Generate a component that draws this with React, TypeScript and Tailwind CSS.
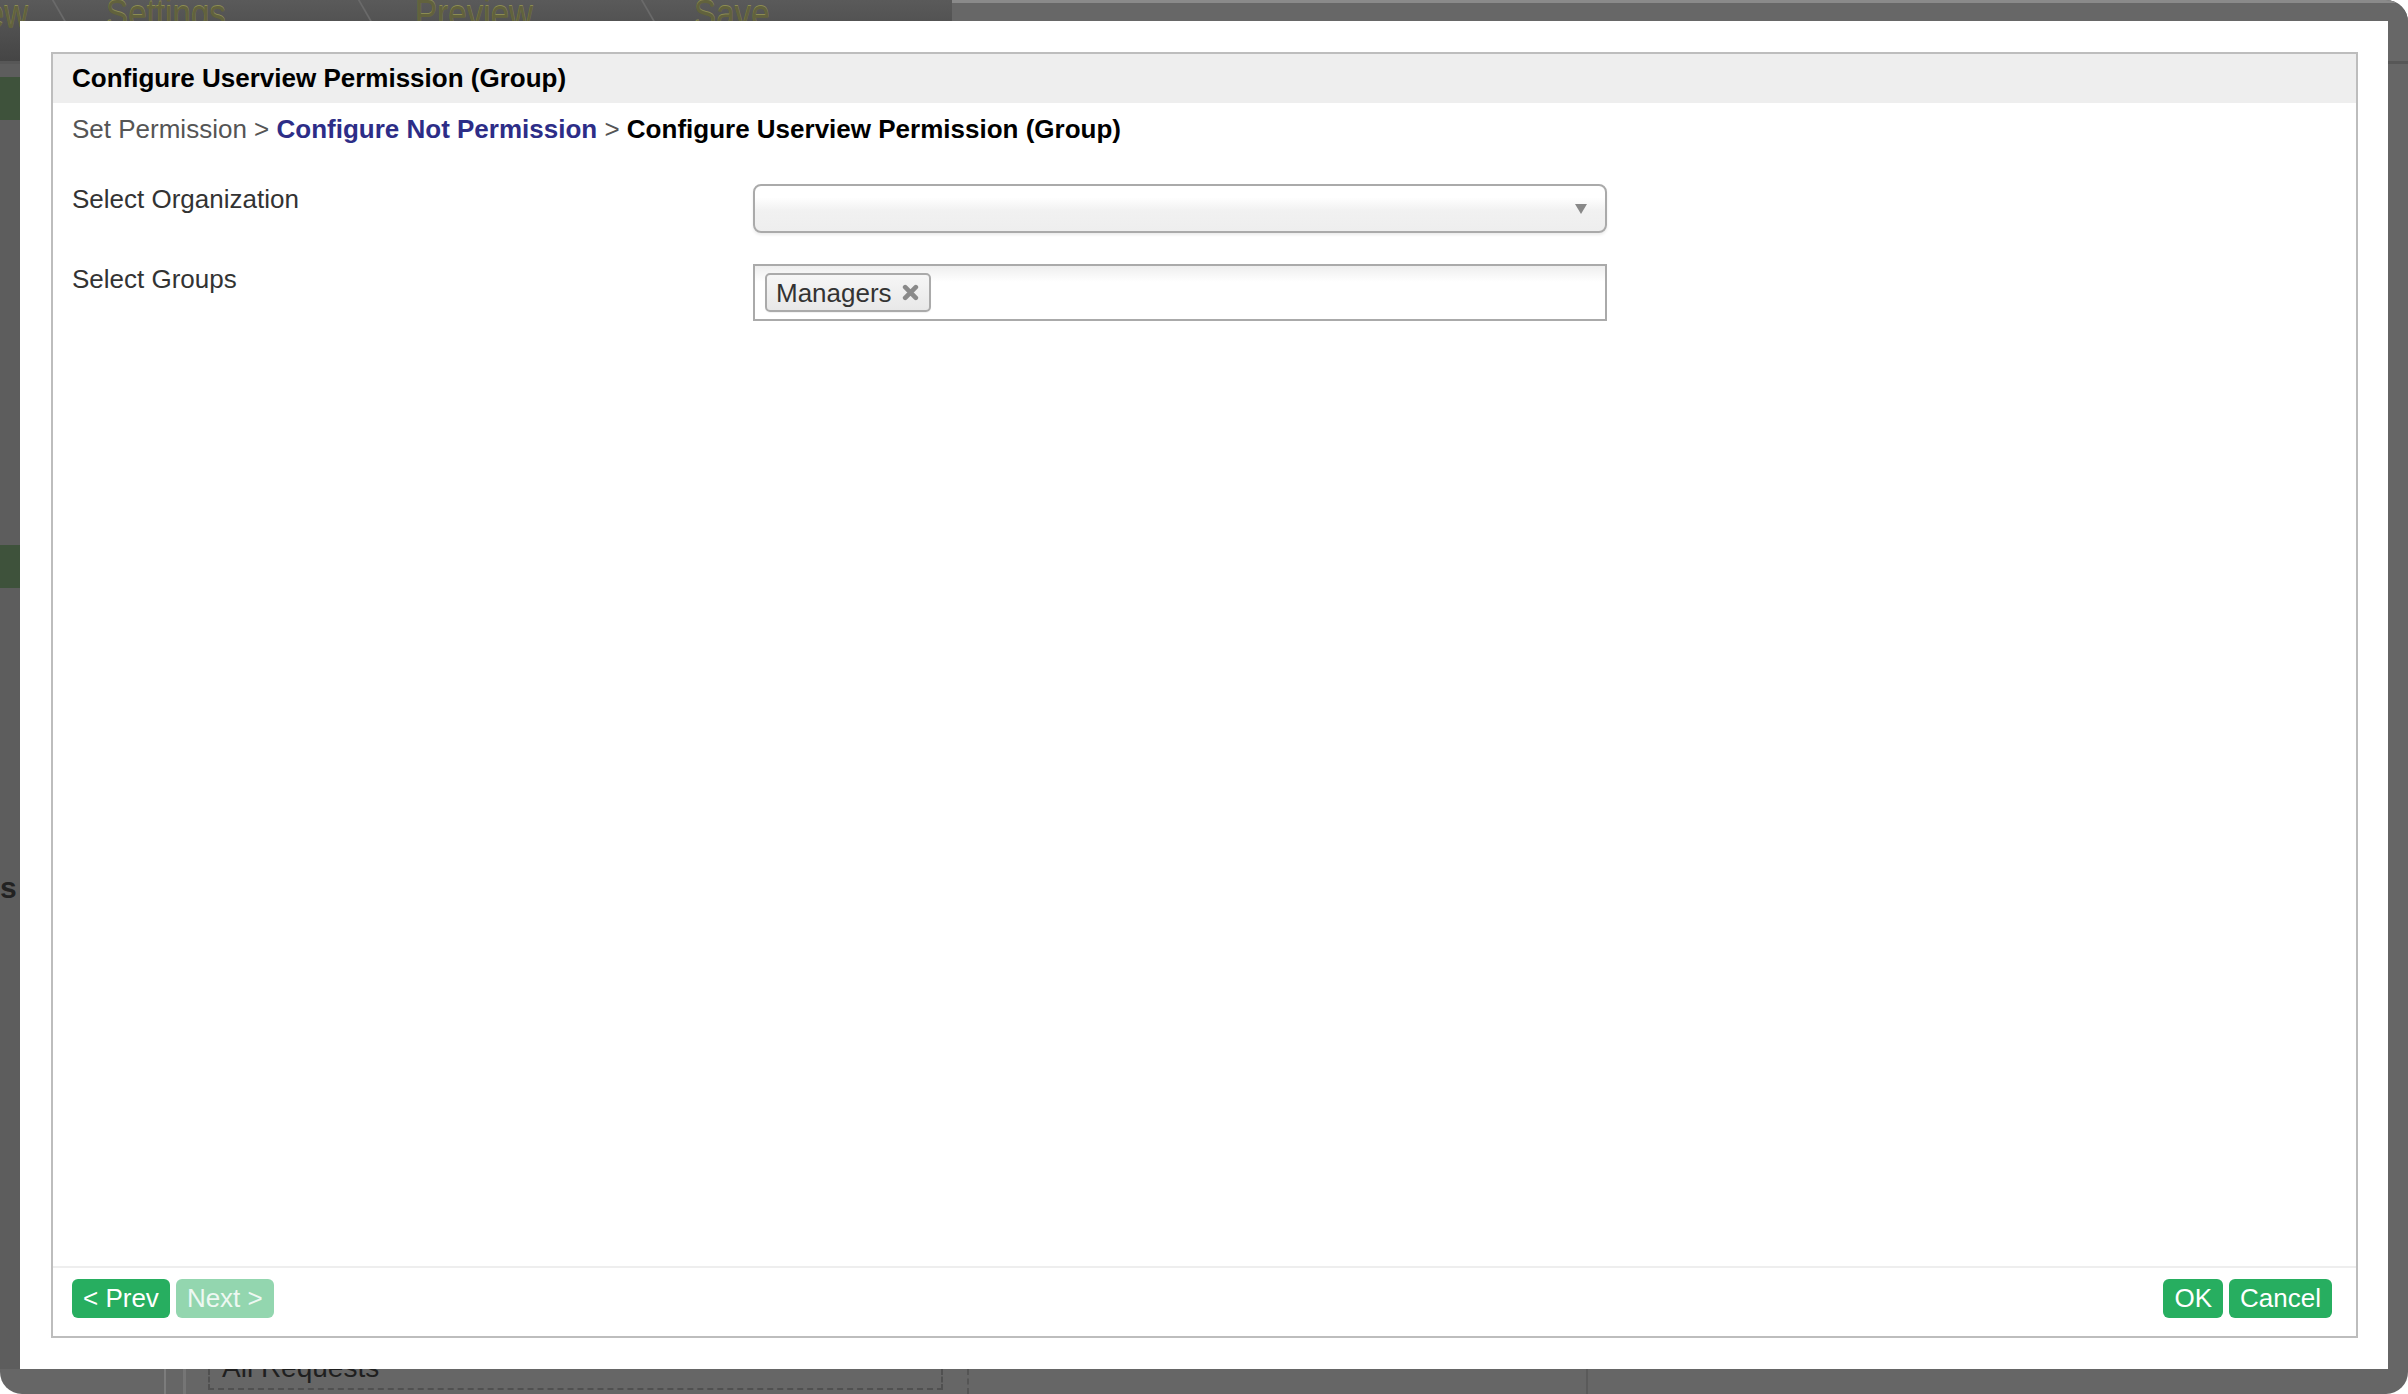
import React from 'react';

// Dimmed page that sits behind the dialog overlay
function TabSeparator() {
  return <span className="mt-[-4px] h-[40px] w-[2px] shrink-0 skew-x-[30deg] bg-[#6a6a6a]" />;
}

function TabLabel({ children }: { children: React.ReactNode }) {
  return (
    <span className="mt-[-6px] inline-block origin-left scale-x-[0.83] whitespace-nowrap text-[40px] leading-[40px] text-[#62623d] [text-shadow:0_-1px_0_#8c8c52]">
      {children}
    </span>
  );
}

function BackgroundPage() {
  return (
    <div className="absolute inset-0 flex flex-col overflow-hidden rounded-tr-[22px] rounded-b-[22px] bg-[#666666]">
      <div className="flex h-[64px] shrink-0 border-b-[3px] border-[#575757]">
        <div className="flex w-[952px] items-start overflow-hidden bg-[linear-gradient(to_bottom,#5a5a5a,#454545)]">
          <div className="flex w-[61px] shrink-0 justify-end pr-[33px]">
            <span className="mt-[-6px] inline-block origin-right scale-x-[0.83] whitespace-nowrap text-[40px] leading-[40px] text-[#62623d] [text-shadow:0_-1px_0_#8c8c52]">
              ew
            </span>
          </div>
          <TabSeparator />
          <div className="flex w-[304px] shrink-0 pl-[43px]">
            <TabLabel>Settings</TabLabel>
          </div>
          <TabSeparator />
          <div className="flex w-[281px] shrink-0 pl-[46px]">
            <TabLabel>Preview</TabLabel>
          </div>
          <TabSeparator />
          <div className="flex flex-1 pl-[42px]">
            <TabLabel>Save</TabLabel>
          </div>
        </div>
        <div className="flex-1 border-t-[3px] border-[#8a8a8a] bg-[#676767]" />
      </div>

      <div className="flex flex-1">
        <div className="flex w-[20px] flex-col bg-[#5d5d5d]">
          <div className="mt-[13px] h-[43px] bg-[#3e523b]" />
          <div className="mt-[425px] h-[43px] bg-[#3e523b]" />
          <div className="mt-[285px] text-[30px] font-bold leading-[30px] text-[#222]">s</div>
        </div>
        <div className="flex-1" />
      </div>

      <div className="flex h-[25px] shrink-0 items-stretch">
        <div className="ml-[164px] w-[2px] bg-[#7c7c7c]" />
        <div className="ml-[17px] w-[3px] bg-[#757575]" />
        <div className="ml-[22px] mb-[4px] w-[735px] border-x-2 border-b-2 border-dashed border-[#505050] pl-[12px]">
          <div className="mt-[-16px] text-[28px] leading-[30px] text-[#1f1f1f]">All Requests</div>
        </div>
        <div className="ml-[24px] w-[2px] border-l-2 border-dashed border-[#555]" />
        <div className="ml-[617px] w-[2px] bg-[#5a5a5a]" />
      </div>
    </div>
  );
}

function SelectArrow() {
  return (
    <svg width="12" height="10" viewBox="0 0 12 10">
      <path d="M0 0 L12 0 L6 10 Z" fill="#888888" />
    </svg>
  );
}

function RemoveIcon() {
  return (
    <svg width="17" height="17" viewBox="0 0 16 16">
      <path d="M3 3 L13 13 M13 3 L3 13" stroke="#8a8a8a" strokeWidth="4.4" strokeLinecap="round" />
    </svg>
  );
}

function PermissionDialog() {
  return (
    <div className="absolute left-[20px] top-[21px] flex h-[1348px] w-[2368px] bg-white pb-[31px] pl-[31px] pr-[30px] pt-[31px]">
      <div className="flex flex-1 flex-col border-2 border-[#bdbdbd]">
        <div className="flex h-[49px] shrink-0 items-center bg-[#eeeeee] pl-[19px] text-[26px] font-bold text-black">
          Configure Userview Permission (Group)
        </div>

        <div className="flex-1 px-[19px]">
          <div className="mt-[11px] text-[26px] leading-[30px] text-[#555555]">
            Set Permission &gt; <span className="font-bold text-[#2d2d87]">Configure Not Permission</span> &gt;{' '}
            <span className="font-bold text-black">Configure Userview Permission (Group)</span>
          </div>

          <div className="mt-[40px] flex flex-col gap-[31px]">
            <div className="flex items-start">
              <label className="w-[681px] shrink-0 text-[26px] leading-[30px] text-[#333333]">Select Organization</label>
              <div className="flex h-[49px] w-[854px] items-center justify-end rounded-[8px] border-2 border-[#aaaaaa] bg-[linear-gradient(to_bottom,#ffffff_0%,#ffffff_25%,#f1f1f1_55%,#eeeeee_100%)] pr-[18px] shadow-[0_2px_3px_rgba(0,0,0,0.08)]">
                <SelectArrow />
              </div>
            </div>

            <div className="flex items-start">
              <label className="w-[681px] shrink-0 text-[26px] leading-[30px] text-[#333333]">Select Groups</label>
              <div className="flex h-[57px] w-[854px] items-start border-2 border-[#aaaaaa] bg-[linear-gradient(to_bottom,#eeeeee_0%,#ffffff_30%)] pl-[10px] pt-[7px]">
                <div className="flex h-[39px] items-center gap-[10px] rounded-[5px] border-2 border-[#aaaaaa] bg-[linear-gradient(to_bottom,#f6f6f6,#e8e8e8)] pl-[9px] pr-[10px] shadow-[0_1px_1px_rgba(0,0,0,0.06)]">
                  <span className="text-[26px] leading-[30px] text-[#333333]">Managers</span>
                  <RemoveIcon />
                </div>
              </div>
            </div>
          </div>
        </div>

        <div className="flex h-[70px] shrink-0 items-start justify-between border-t-2 border-[#eeeeee] pl-[19px] pr-[24px] pt-[11px]">
          <div className="flex gap-[6px]">
            <button className="h-[39px] rounded-[6px] bg-[#27ae60] px-[11px] text-[26px] leading-[39px] text-white">&lt; Prev</button>
            <button className="h-[39px] rounded-[6px] bg-[#93d6af] px-[11px] text-[26px] leading-[39px] text-[#eef8f2]">Next &gt;</button>
          </div>
          <div className="flex gap-[6px]">
            <button className="h-[39px] rounded-[6px] bg-[#27ae60] px-[11px] text-[26px] leading-[39px] text-white">OK</button>
            <button className="h-[39px] rounded-[6px] bg-[#27ae60] px-[11px] text-[26px] leading-[39px] text-white">Cancel</button>
          </div>
        </div>
      </div>
    </div>
  );
}

export default function App() {
  return (
    <div className="relative h-[1394px] w-[2408px] overflow-hidden bg-white font-['Liberation_Sans',Arial,sans-serif]">
      <BackgroundPage />
      <PermissionDialog />
    </div>
  );
}
